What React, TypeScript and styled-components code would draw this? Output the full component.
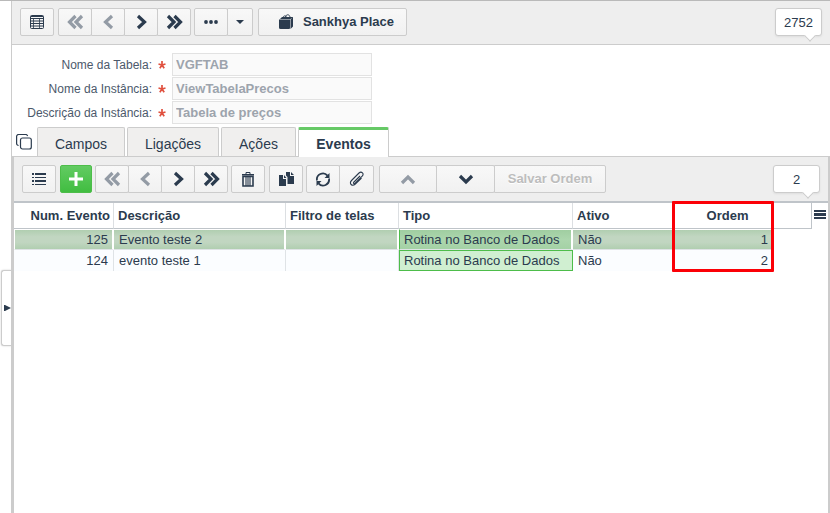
import React from 'react';
import styled, { createGlobalStyle, css } from 'styled-components';

const ink = '#2b3b4e';
const edge = '#cccccc';

const GlobalStyle = createGlobalStyle`
  *, *::before, *::after { box-sizing: border-box; }
  body { margin: 0; background: #fff; color: ${ink}; font: 13px/16px "Liberation Sans", Arial, sans-serif; }
  button, input { font: inherit; color: inherit; margin: 0; }
`;

const Page = styled.div`
  display: flex;
  min-height: 100vh;
  border-top: 1px solid #b9b9b9;
`;

const Gutter = styled.aside`
  flex: 0 0 11px;
  padding-top: 269px;
`;

const Handle = styled.button`
  display: flex;
  align-items: center;
  justify-content: flex-end;
  width: 10px;
  height: 76px;
  margin-left: 1px;
  padding: 0;
  background: #fff;
  border: 1px solid ${edge};
  border-right: 0;
  border-radius: 3px 0 0 3px;
  box-shadow: 0 0 2px #ccc;
`;

const Main = styled.main`
  flex: 1;
  min-width: 0;
  display: flex;
  flex-direction: column;
`;

const Header = styled.div`
  border-left: 1px solid ${edge};
`;

const Toolbar = styled.div`
  display: flex;
  align-items: flex-start;
  height: 44px;
  padding: 7px 8px;
  background: #eee;
  border-bottom: 1px solid ${edge};
`;

const GridToolbar = styled(Toolbar)`
  height: 46px;
  padding-top: 8px;
  border-bottom: 2px solid #bfc4c9;
`;

const Group = styled.div<{ $gap?: number }>`
  display: flex;
  margin-right: ${p => p.$gap ?? 3}px;
`;

const Button = styled.button<{ $width: number; $primary?: boolean }>`
  display: flex;
  align-items: center;
  justify-content: center;
  flex: none;
  width: ${p => p.$width}px;
  height: 28px;
  padding: 0;
  border: 1px solid ${edge};
  border-radius: 2px;
  background: linear-gradient(#f8f8f8, #f1f1f1);
  font-weight: bold;
  & + & { margin-left: -1px; border-top-left-radius: 0; border-bottom-left-radius: 0; }
  &:disabled { color: #939ba5; }
  ${p => p.$primary && css`
    color: #fff;
    border-color: #4dbd4a;
    background: linear-gradient(#62cb62, #41bd41);
  `}
`;

const MarketButton = styled(Button)`
  gap: 9px;
  padding-left: 8px;
`;

const SaveButton = styled(Button)`
  &:disabled { color: #bdbdbd; }
  text-shadow: 0 1px 0 #fff;
`;

const Counter = styled.output`
  position: relative;
  width: 47px;
  height: 28px;
  margin-left: auto;
  border: 1px solid ${edge};
  border-radius: 3px;
  background: #fff;
  text-align: center;
  line-height: 27px;
  box-shadow: 0 1px 2px #ddd;
  &::after {
    content: '';
    position: absolute;
    right: 7px;
    bottom: -5px;
    width: 8px;
    height: 8px;
    background: #fff;
    border: solid ${edge};
    border-width: 0 1px 1px 0;
    transform: rotate(45deg);
  }
`;

const Form = styled.form`
  display: grid;
  gap: 1px;
  padding: 8px 0 3px 8px;
`;

const Field = styled.div`
  display: grid;
  grid-template-columns: 132px 20px 200px;
  align-items: center;
`;

const Label = styled.label`
  text-align: right;
  font-size: 12px;
  color: #4c596b;
`;

const Required = styled.span`
  display: flex;
  justify-content: center;
  color: #e0513f;
`;

const TextBox = styled.input`
  width: 100%;
  height: 23px;
  padding: 0 3px;
  border: 1px solid #e2e2e2;
  background: #fafafa;
  font-weight: bold;
  &:disabled { color: #9da4ad; }
`;

const Tabs = styled.div`
  display: flex;
  gap: 2px;
  height: 29px;
  padding-left: 2px;
`;

const CopyTab = styled.button`
  display: flex;
  align-items: center;
  width: 21px;
  padding: 0 0 0 2px;
  border: 0;
  background: none;
`;

const Tab = styled.button<{ $width: number; $active?: boolean }>`
  width: ${p => p.$width}px;
  padding: 4px 0 0;
  border: 1px solid ${edge};
  border-bottom: 0;
  border-radius: 2px 2px 0 0;
  background: #f0efee;
  font-size: 14px;
  ${p => p.$active && css`
    position: relative;
    margin-bottom: -1px;
    padding-top: 1px;
    border-top: 3px solid #66c966;
    background: #fff;
    font-weight: bold;
  `}
`;

const Panel = styled.section`
  flex: 1;
  border: solid ${edge};
  border-width: 1px 2px 0 3px;
`;

const GridArea = styled.div`
  position: relative;
`;

const Table = styled.table`
  width: 100%;
  table-layout: fixed;
  border-collapse: separate;
  border-spacing: 0;
`;

const Col = styled.col<{ $width?: number }>`
  width: ${p => (p.$width ? `${p.$width}px` : 'auto')};
`;

type Align = 'left' | 'right' | 'center';

const HeadCell = styled.th<{ $align?: Align; $line?: boolean }>`
  height: 26px;
  padding: 0 ${p => (p.$align === 'right' ? 3 : 4)}px 0 ${p => (p.$align === 'center' ? 12 : 4)}px;
  text-align: ${p => p.$align ?? 'left'};
  border-bottom: 1px solid #bfc4c9;
  border-right: ${p => (p.$line ? '1px solid #dcdfe2' : '0')};
  white-space: nowrap;
`;

const MenuCell = styled.th`
  height: 26px;
  padding: 0;
  border-left: 1px solid #bfc4c9;
`;

const MenuButton = styled.button`
  display: block;
  padding: 0 2px;
  border: 0;
  background: none;
`;

const Cell = styled.td<{ $align?: Align; $line?: boolean; $tone: 'plain' | 'selected'; $type?: boolean }>`
  height: 21px;
  padding: 1px 5px 0;
  text-align: ${p => p.$align ?? 'left'};
  white-space: nowrap;
  ${p => p.$tone === 'selected'
    ? css`
      border-top: 1px solid #fff;
      border-bottom: 1px solid #dfe3e6;
      border-right: ${p.$line ? '2px solid #fff' : '0'};
      background: linear-gradient(#b0ceb0, #c1d6c1 35%, #c1d6c1 65%, #b0ceb0);
      &:first-child { border-left: 1px solid #fff; padding-right: 4px; }
    `
    : css`
      border-right: ${p.$line ? '1px solid #dfe3e6' : '0'};
      background: #fbfdff;
    `}
  ${p => p.$type && (p.$tone === 'selected'
    ? css`background: linear-gradient(#a0cea1, #acd6ad 50%, #a4d1a5); border-left: 1px solid #4dbd4a; padding-left: 4px;`
    : css`background: #d0efd1; border: 1px solid #4dbd4a; padding: 0 4px;`)}
`;

const Highlight = styled.div`
  position: absolute;
  left: 658px;
  top: -2px;
  width: 102px;
  height: 71px;
  border: 3px solid #fb0007;
  border-radius: 1px;
  pointer-events: none;
`;

const Chevron = ({ d }: { d: string }) => (
  <svg width="22" height="16" viewBox="0 0 22 16" fill="none" stroke="currentColor" strokeWidth="3.2">
    <path d={d} />
  </svg>
);
const First = () => <Chevron d="M11.500 2 5.500 8l6 6M18 2l-6 6 6 6" />;
const Prev = () => <Chevron d="M15 2 8.500 8l6.500 6" />;
const Next = () => <Chevron d="m8 2 6.500 6L8 14" />;
const Last = () => <Chevron d="m5 2 6 6-6 6M11.500 2l6 6-6 6" />;
const Up = () => <Chevron d="m5 12 6-6 6 6" />;
const Down = () => <Chevron d="m5 5 6 6 6-6" />;

const GridIcon = () => (
  <svg width="14" height="14" viewBox="0 0 14 14" fill="none" stroke="currentColor">
    <rect x=".5" y=".5" width="13" height="13" rx="1" />
    <path d="M1 1.500h12M1 3.500h12M1 6h12M1 8.500h12M1 11h12" />
    <path d="M3.500 3v10M9.500 3v10" strokeWidth=".8" />
  </svg>
);
const Dots = () => (
  <svg width="14" height="4" viewBox="0 0 14 4" fill="currentColor">
    <circle cx="2" cy="2" r="1.900" /><circle cx="7" cy="2" r="1.900" /><circle cx="12" cy="2" r="1.900" />
  </svg>
);
const Caret = () => (
  <svg width="8" height="4" viewBox="0 0 8 4" fill="currentColor"><path d="M0 0h8L4 4z" /></svg>
);
const Bag = () => (
  <svg width="15" height="16" viewBox="0 0 15 16" fill="currentColor">
    <path d="M0 5.500h11V14a1 1 0 0 1-1 1H1.500A1.500 1.500 0 0 1 0 13.500z" />
    <path d="M1 5l2-2h11l-2.500 2zM11.500 5.500 14 3v9.500L11.500 15z" />
    <path d="M3.500 5C4 1 7 1 8 4M6.500 3C7 0 10.500 0 11 3" fill="none" stroke="currentColor" strokeWidth=".9" />
  </svg>
);
const Asterisk = () => (
  <svg width="8" height="10" viewBox="0 0 8 10" stroke="currentColor" strokeWidth="1.700">
    <path d="M4 1v4M4 5 .5 4M4 5l3.500-1M4 5 1.800 8.200M4 5l2.200 3.200" />
  </svg>
);
const CopyOutline = () => (
  <svg width="16" height="16" viewBox="0 0 16 16" fill="none" stroke="currentColor" strokeWidth="1.200">
    <rect x="4.500" y="4" width="10.800" height="11" rx="2" />
    <path d="M2.600 11.500a2 2 0 0 1-2-2v-7a2 2 0 0 1 2-2h7a2 2 0 0 1 2 1.500" />
  </svg>
);
const ListIcon = () => (
  <svg width="14" height="14" viewBox="0 0 14 14" fill="currentColor">
    <path d="M0 1h2v2H0zM0 5h2v1H0zM0 8h2v2H0zM0 12h2v1H0zM3 1h11v2H3zM3 5h11v1H3zM3 8h11v2H3zM3 12h11v1H3z" />
  </svg>
);
const Plus = () => (
  <svg width="14" height="14" viewBox="0 0 14 14" fill="currentColor"><path d="M5.500 0h3v5.500H14v3H8.500V14h-3V8.500H0v-3h5.500z" /></svg>
);
const Trash = () => (
  <svg width="12" height="15" viewBox="0 0 12 15" fill="none" stroke="currentColor">
    <path d="M4 2V.5h4V2" /><path d="M0 2.800h12" strokeWidth="1.600" />
    <path d="M1 4.500h10v9.500H1z" strokeWidth="1.600" /><path d="M4 5v9M6 5v9M8 5v9" strokeWidth="1.100" />
  </svg>
);
const Pages = () => (
  <svg width="15" height="14" viewBox="0 0 15 14" fill="currentColor">
    <path d="M0 3h4v4h3v7H0zM5 3l2.500 3H5z" />
    <path d="M7 0h4v4h4v8H8.500V5L7 3.500zM12 0l3 3h-3z" />
  </svg>
);
const Refresh = () => (
  <svg width="16" height="15" viewBox="0 0 16 15" fill="none" stroke="currentColor" strokeWidth="1.800">
    <path d="M2 8.500A6 6 0 0 1 12.500 3.600M14 6.500A6 6 0 0 1 3.500 11.400" />
    <path d="M14.500 1v5h-5zM1.500 14V9h5z" fill="currentColor" stroke="none" />
  </svg>
);
const Clip = () => (
  <svg width="16" height="16" viewBox="0 0 16 16" fill="none" stroke="currentColor" strokeWidth="1.100">
    <path d="m11 5-6 6c-1.200 1.200-.1 2.300 1.200 1.200l7-7c2.500-2.500-.8-5.500-3.200-3.200L2.500 9.500c-3 3 .8 6.500 3.800 3.500L12.500 7" />
  </svg>
);
const Menu = () => (
  <svg width="12" height="10" viewBox="0 0 12 10" fill="currentColor"><path d="M0 0h12v2H0zM0 3h12v3H0zM0 7h12v2H0z" /></svg>
);
const Play = () => (
  <svg width="7" height="6" viewBox="0 0 7 6" fill="currentColor"><path d="M0 0h1l6 3-6 3H0z" /></svg>
);

const Navigation = ({ gap }: { gap: number }) => (
  <Group $gap={gap}>
    <Button $width={34} disabled aria-label="Primeiro"><First /></Button>
    <Button $width={34} disabled aria-label="Anterior"><Prev /></Button>
    <Button $width={34} aria-label="Próximo"><Next /></Button>
    <Button $width={34} aria-label="Último"><Last /></Button>
  </Group>
);

const fields = [
  { id: 'tabela', label: 'Nome da Tabela:', value: 'VGFTAB' },
  { id: 'instancia', label: 'Nome da Instância:', value: 'ViewTabelaPrecos' },
  { id: 'descricao', label: 'Descrição da Instância:', value: 'Tabela de preços' },
];

const events = [
  { num: 125, description: 'Evento teste 2', type: 'Rotina no Banco de Dados', active: 'Não', order: 1, selected: true },
  { num: 124, description: 'evento teste 1', type: 'Rotina no Banco de Dados', active: 'Não', order: 2, selected: false },
];

export default function App() {
  return (
    <Page>
      <GlobalStyle />
      <Gutter><Handle aria-label="Expandir painel"><Play /></Handle></Gutter>
      <Main>
        <Header>
          <Toolbar>
            <Group $gap={4}><Button $width={34} aria-label="Modo grade"><GridIcon /></Button></Group>
            <Navigation gap={3} />
            <Group $gap={5}>
              <Button $width={34} aria-label="Mais opções"><Dots /></Button>
              <Button $width={26} aria-label="Abrir menu"><Caret /></Button>
            </Group>
            <MarketButton $width={149}><Bag />Sankhya Place</MarketButton>
            <Counter>2752</Counter>
          </Toolbar>
          <Form>
            {fields.map(f => (
              <Field key={f.id}>
                <Label htmlFor={f.id}>{f.label}</Label>
                <Required><Asterisk /></Required>
                <TextBox id={f.id} defaultValue={f.value} disabled />
              </Field>
            ))}
          </Form>
          <Tabs role="tablist">
            <CopyTab aria-label="Duplicar"><CopyOutline /></CopyTab>
            <Tab role="tab" $width={88}>Campos</Tab>
            <Tab role="tab" $width={92}>Ligações</Tab>
            <Tab role="tab" $width={75}>Ações</Tab>
            <Tab role="tab" $width={91} $active aria-selected>Eventos</Tab>
          </Tabs>
        </Header>
        <Panel>
          <GridToolbar>
            <Group $gap={4}><Button $width={34} aria-label="Lista"><ListIcon /></Button></Group>
            <Group><Button $width={32} $primary aria-label="Adicionar"><Plus /></Button></Group>
            <Navigation gap={3} />
            <Group $gap={4}><Button $width={34} aria-label="Excluir"><Trash /></Button></Group>
            <Group><Button $width={34} aria-label="Copiar"><Pages /></Button></Group>
            <Group $gap={5}>
              <Button $width={34} aria-label="Atualizar"><Refresh /></Button>
              <Button $width={35} aria-label="Anexos"><Clip /></Button>
            </Group>
            <Group>
              <Button $width={58} disabled aria-label="Mover para cima"><Up /></Button>
              <Button $width={59} aria-label="Mover para baixo"><Down /></Button>
              <SaveButton $width={112} disabled>Salvar Ordem</SaveButton>
            </Group>
            <Counter>2</Counter>
          </GridToolbar>
          <GridArea>
            <Table>
              <colgroup>
                <Col $width={100} /><Col $width={172} /><Col $width={113} /><Col $width={174} />
                <Col $width={101} /><Col $width={99} /><Col /><Col $width={17} />
              </colgroup>
              <thead>
                <tr>
                  <HeadCell $align="right" $line>Num. Evento</HeadCell>
                  <HeadCell $line>Descrição</HeadCell>
                  <HeadCell $line>Filtro de telas</HeadCell>
                  <HeadCell $line>Tipo</HeadCell>
                  <HeadCell>Ativo</HeadCell>
                  <HeadCell $align="center">Ordem</HeadCell>
                  <HeadCell />
                  <MenuCell><MenuButton aria-label="Configurar colunas"><Menu /></MenuButton></MenuCell>
                </tr>
              </thead>
              <tbody>
                {events.map(e => {
                  const tone = e.selected ? 'selected' : 'plain';
                  return (
                    <tr key={e.num}>
                      <Cell $tone={tone} $align="right" $line>{e.num}</Cell>
                      <Cell $tone={tone} $line>{e.description}</Cell>
                      <Cell $tone={tone} $line />
                      <Cell $tone={tone} $type $line>{e.type}</Cell>
                      <Cell $tone={tone}>{e.active}</Cell>
                      <Cell $tone={tone} $align="right">{e.order}</Cell>
                    </tr>
                  );
                })}
              </tbody>
            </Table>
            <Highlight />
          </GridArea>
        </Panel>
      </Main>
    </Page>
  );
}
